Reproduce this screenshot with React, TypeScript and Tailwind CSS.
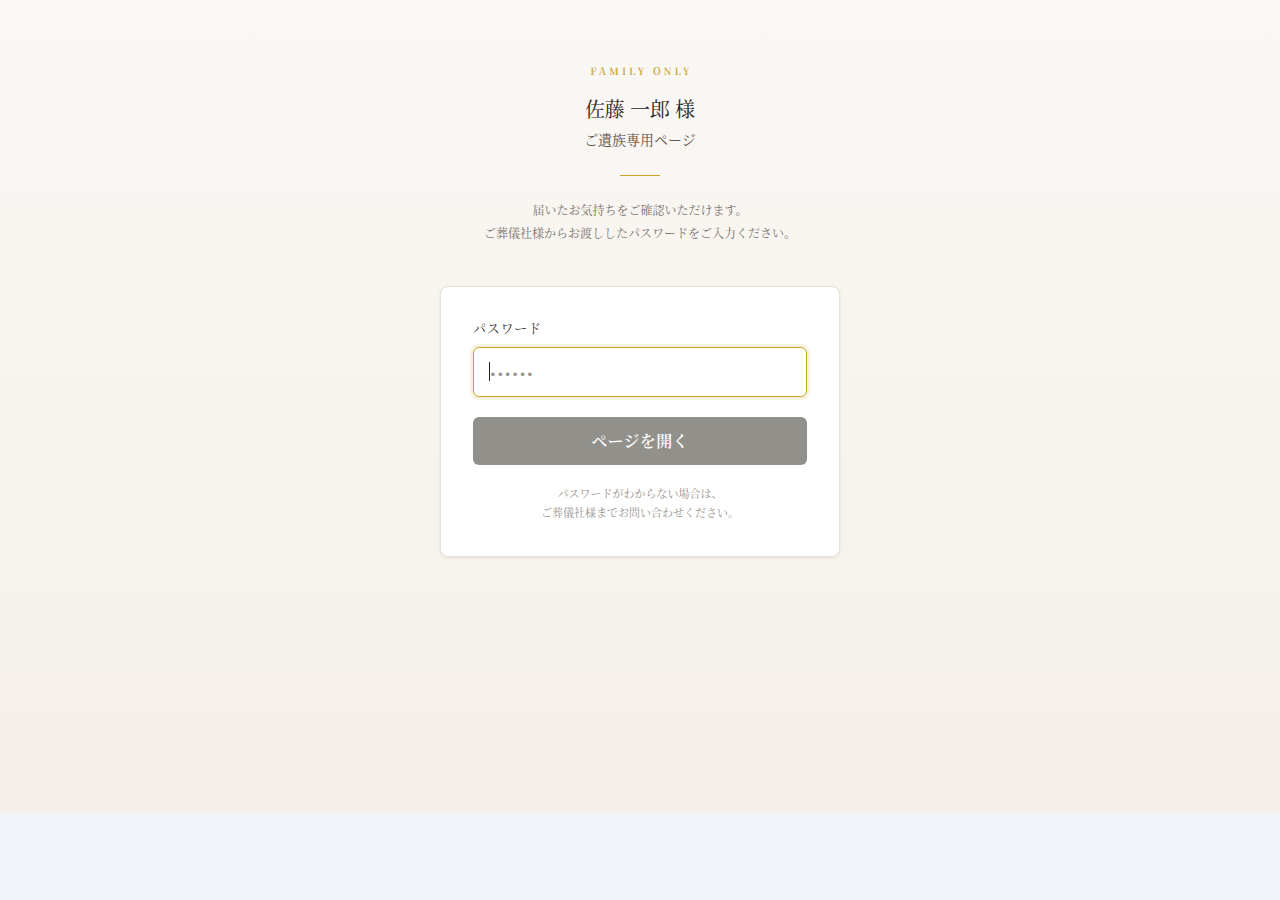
import React from "react";

const serif = { fontFamily: '"Noto Serif CJK JP", "Noto Serif JP", "Liberation Serif", "Noto Sans CJK JP", serif' };

export default function App() {
  return (
    <div className="min-h-[900px] bg-[#f0f4f8]" style={serif}>
      <div className="h-[813px] bg-gradient-to-b from-[#faf8f5] to-[#f4efe8] flex flex-col items-center pt-[65px]">
        <div className="text-[10px] leading-[12px] tracking-[0.3em] text-[#c9a227] font-semibold pl-[0.3em]">FAMILY ONLY</div>
        <h1 className="mt-[18px] text-[20px] leading-[28px] text-[#2b2622]">佐藤 一郎 様</h1>
        <div className="mt-[6px] text-[14px] leading-[20px] text-[#5c534b]">ご遺族専用ページ</div>
        <div className="mt-[26px] w-[40px] h-px bg-[#c9a227]"></div>
        <div className="mt-[22px] text-[12px] leading-[23px] text-[#7a716a] text-center">
          <p>届いたお気持ちをご確認いただけます。</p>
          <p>ご葬儀社様からお渡ししたパスワードをご入力ください。</p>
        </div>
        <div className="mt-[42px] w-[400px] bg-white border border-[#e6e0d8] rounded-[8px] shadow-[0_1px_3px_rgba(0,0,0,0.08)] px-[32px] pt-[31px] pb-[34px]">
          <label className="block text-[13px] leading-[20px] tracking-[0.06em] text-[#3a332d]">パスワード</label>
          <div className="relative mt-[9px]">
            <input
              type="password"
              placeholder="••••••"
              className="w-full h-[50px] rounded-[6px] border border-[#c9a227] ring-[3px] ring-[#c9a227]/15 px-[16px] text-[17px] placeholder:text-[#9a948e] outline-none tracking-[0.1em]"
            />
            <span className="absolute left-[16px] top-[15px] w-px h-[19px] bg-[#222]"></span>
          </div>
          <button className="mt-[20px] w-full h-[48px] rounded-[6px] bg-[#92908b] text-white text-[16px] font-semibold tracking-[0.02em]">
            ページを開く
          </button>
          <div className="mt-[19px] text-[11px] leading-[19px] text-[#9a918a] text-center">
            <p>パスワードがわからない場合は、</p>
            <p>ご葬儀社様までお問い合わせください。</p>
          </div>
        </div>
      </div>
    </div>
  );
}
